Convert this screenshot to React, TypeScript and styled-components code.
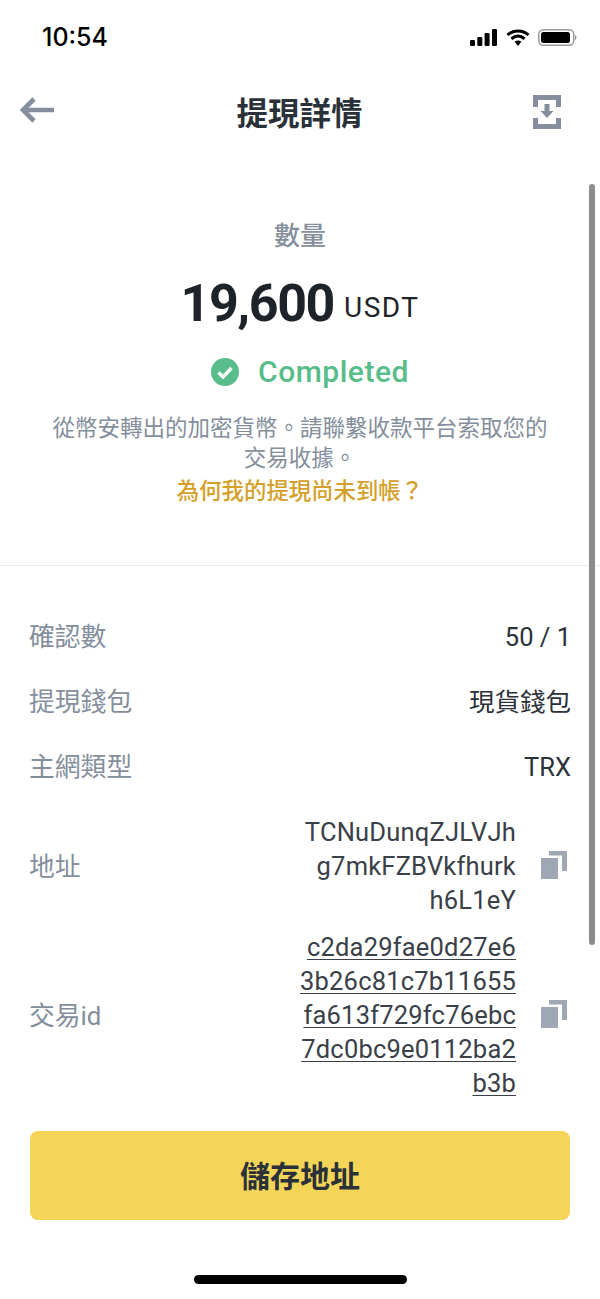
import React from "react";
import styled, { createGlobalStyle } from "styled-components";

const GlobalStyle = createGlobalStyle`
  html, body {
    margin: 0;
    padding: 0;
    background: #fff;
  }
  body {
    font-family: Roboto, "Noto Sans CJK TC", sans-serif;
  }
`;

const BackIcon = () => (
  <svg width="36" height="30" viewBox="0 0 36 30">
    <path d="M15 3 L4 14 L15 25 M5 14 H35" fill="none" stroke="#848e9c" strokeWidth="4.6" />
  </svg>
);

const SaveIcon = () => (
  <SaveGlyph width="28" height="34" viewBox="0 0 28 34" fill="#848e9c">
    <path d="M0 0 H28 V12 H23 V5 H5 V12 H0 Z" />
    <path d="M0 23 H5 V29 H23 V23 H28 V34 H0 Z" />
    <path d="M11.5 9 H16.5 V16 H20.5 L14 23 L7.5 16 H11.5 Z" />
  </SaveGlyph>
);

const CopyIcon = () => (
  <CopyGlyph width="26" height="28" viewBox="0 0 26 28" fill="#a0a7b4">
    <rect x="0" y="7" width="17" height="21" />
    <path d="M8 0 H26 V20 H21 V4.5 H8 Z" />
  </CopyGlyph>
);

const CheckIcon = () => (
  <svg width="28" height="28" viewBox="0 0 28 28">
    <circle cx="14" cy="14" r="14" fill="#58bd8a" />
    <path d="M7.5 14.5 L12 19 L20.5 10" fill="none" stroke="#fff" strokeWidth="3.4" />
  </svg>
);

const rows = [
  { label: "確認數", value: "50 / 1", latin: true },
  { label: "提現錢包", value: "現貨錢包", latin: false },
  { label: "主網類型", value: "TRX", latin: true },
];

const App = () => {
  return (
    <Screen>
      <GlobalStyle />
      <StatusBar>
        <Time>10:54</Time>
        <StatusIcons>
          <svg width="27" height="17" viewBox="0 0 27 17" fill="#000">
            <rect x="0" y="11" width="5" height="6" rx="1.2" />
            <rect x="7.3" y="8" width="5" height="9" rx="1.2" />
            <rect x="14.6" y="4" width="5" height="13" rx="1.2" />
            <rect x="22" y="0" width="5" height="17" rx="1.2" />
          </svg>
          <svg width="24" height="17" viewBox="0 0 24 17">
            <path d="M1.5 6 C7.5 0.6 16.5 0.6 22.5 6 M5.4 9.8 C9.4 6.2 14.6 6.2 18.6 9.8" fill="none" stroke="#000" strokeWidth="3" />
            <path d="M8.6 12.8 C10.6 11.1 13.4 11.1 15.4 12.8 L12 17 Z" fill="#000" />
          </svg>
          <svg width="39" height="17" viewBox="0 0 39 17">
            <rect x="0.75" y="0.75" width="35" height="15.5" rx="4.5" fill="none" stroke="#9b9b9b" strokeWidth="1.5" />
            <rect x="3" y="3" width="29" height="11" rx="2.5" fill="#000" />
            <path d="M37 6 C39 6.6 39 10.4 37 11 Z" fill="#9b9b9b" />
          </svg>
        </StatusIcons>
      </StatusBar>

      <Header>
        <BackIcon />
        <Title>提現詳情</Title>
        <SaveIcon />
      </Header>

      <Content>
        <ScrollThumb />
        <Summary>
          <AmountLabel>數量</AmountLabel>
          <Amount>
            <AmountValue>19,600</AmountValue>
            <AmountUnit>USDT</AmountUnit>
          </Amount>
          <Status>
            <CheckIcon />
            <StatusText>Completed</StatusText>
          </Status>
          <Note>從幣安轉出的加密貨幣。請聯繫收款平台索取您的交易收據。</Note>
          <HelpLink>為何我的提現尚未到帳？</HelpLink>
        </Summary>

        <Details>
          {rows.map((row) => (
            <Row key={row.label}>
              <Label>{row.label}</Label>
              <Value $latin={row.latin}>{row.value}</Value>
            </Row>
          ))}
          <CopyRow>
            <CopyLabel>地址</CopyLabel>
            <LongValue>
              TCNuDunqZJLVJh
              <br />
              g7mkFZBVkfhurk
              <br />
              h6L1eY
            </LongValue>
            <CopyIcon />
          </CopyRow>
          <CopyRow>
            <CopyLabel>交易id</CopyLabel>
            <LongValue $link>
              c2da29fae0d27e6
              <br />
              3b26c81c7b11655
              <br />
              fa613f729fc76ebc
              <br />
              7dc0bc9e0112ba2
              <br />
              b3b
            </LongValue>
            <CopyIcon />
          </CopyRow>
        </Details>
      </Content>

      <Footer>
        <SaveButton>儲存地址</SaveButton>
        <HomeIndicator />
      </Footer>
    </Screen>
  );
};
export default App;

const Screen = styled.div`
  width: 600px;
  height: 1299px;
  display: flex;
  flex-direction: column;
  overflow: hidden;
  background: #fff;
  color: #1e2329;
`;

const StatusBar = styled.div`
  height: 72px;
  box-sizing: border-box;
  padding: 2px 23px 0 42px;
  display: flex;
  align-items: center;
  justify-content: space-between;
`;

const Time = styled.span`
  font-family: Inter, sans-serif;
  font-size: 25px;
  font-weight: 500;
  color: #000;
`;

const StatusIcons = styled.div`
  display: flex;
  align-items: center;
  gap: 8.5px;
`;

const Header = styled.div`
  height: 80px;
  box-sizing: border-box;
  padding: 0 39px 2px 19px;
  display: flex;
  align-items: center;
  justify-content: space-between;
`;

const Title = styled.h1`
  margin: 0 0 0 11px;
  font-size: 31.5px;
  font-weight: 700;
  color: #2b3139;
`;

const SaveGlyph = styled.svg`
  margin-top: 2px;
`;

const Content = styled.div`
  position: relative;
  height: 979px;
`;

const ScrollThumb = styled.div`
  position: absolute;
  top: 32px;
  right: 5px;
  width: 6px;
  height: 761px;
  border-radius: 3px;
  background: #8c8c8c;
`;

const Summary = styled.section`
  height: 414px;
  box-sizing: border-box;
  padding-top: 66px;
  border-bottom: 1px solid #e9ecef;
  display: flex;
  flex-direction: column;
  align-items: center;
`;

const AmountLabel = styled.div`
  font-size: 26px;
  line-height: 36px;
  font-weight: 500;
  color: #848e9c;
`;

const Amount = styled.div`
  margin-top: 22px;
  display: flex;
  align-items: flex-end;
  gap: 10px;
`;

const AmountValue = styled.span`
  font-size: 52px;
  line-height: 56px;
  font-weight: 700;
  letter-spacing: -1.4px;
`;

const AmountUnit = styled.span`
  margin-bottom: 10px;
  font-size: 28px;
  line-height: 28px;
  font-weight: 400;
  letter-spacing: 1.5px;
`;

const Status = styled.div`
  margin-top: 19px;
  padding-left: 20px;
  display: flex;
  align-items: center;
  gap: 19px;
`;

const StatusText = styled.span`
  font-size: 30px;
  line-height: 42px;
  font-weight: 500;
  letter-spacing: 0.5px;
  color: #58bd8a;
`;

const Note = styled.p`
  margin: 20px 0 0;
  width: 510px;
  font-size: 22.5px;
  line-height: 30px;
  text-align: center;
  color: #848e9c;
`;

const HelpLink = styled.a`
  font-size: 22.4px;
  line-height: 36px;
  font-weight: 500;
  color: #d4a02a;
`;

const Details = styled.section`
  padding: 36px 29px 0;
  display: flex;
  flex-direction: column;
`;

const Row = styled.div`
  height: 65px;
  display: flex;
  align-items: center;
  justify-content: space-between;
`;

const Label = styled.span`
  font-size: 25.8px;
  color: #848e9c;
`;

const Value = styled.span<{ $latin?: boolean }>`
  padding-top: ${(p) => (p.$latin ? "4px" : "0")};
  font-size: 25.5px;
  color: #2b3139;
`;

const CopyRow = styled.div`
  margin-top: 18px;
  margin-bottom: -5px;
  display: flex;
  align-items: center;
  gap: 25px;
`;

const CopyLabel = styled(Label)`
  flex: 1;
  margin-bottom: 4px;
`;

const LongValue = styled.div<{ $link?: boolean }>`
  font-size: 25.5px;
  line-height: 34px;
  letter-spacing: 0.2px;
  text-align: right;
  color: #3a4048;
  text-decoration: ${(p) => (p.$link ? "underline" : "none")};
  text-decoration-thickness: 1px;
  text-underline-offset: 3px;
`;

const CopyGlyph = styled.svg`
  margin: 0 4px 2px 0;
`;

const Footer = styled.div`
  flex: 1;
  padding: 0 30px;
  display: flex;
  flex-direction: column;
  align-items: center;
`;

const SaveButton = styled.button`
  width: 540px;
  height: 89px;
  padding: 0 0 3px;
  border: none;
  border-radius: 8px;
  background: #f5d558;
  font-family: inherit;
  font-size: 30px;
  font-weight: 700;
  color: #2b3139;
`;

const HomeIndicator = styled.div`
  margin-top: 55px;
  width: 213px;
  height: 9px;
  border-radius: 5px;
  background: #000;
`;
